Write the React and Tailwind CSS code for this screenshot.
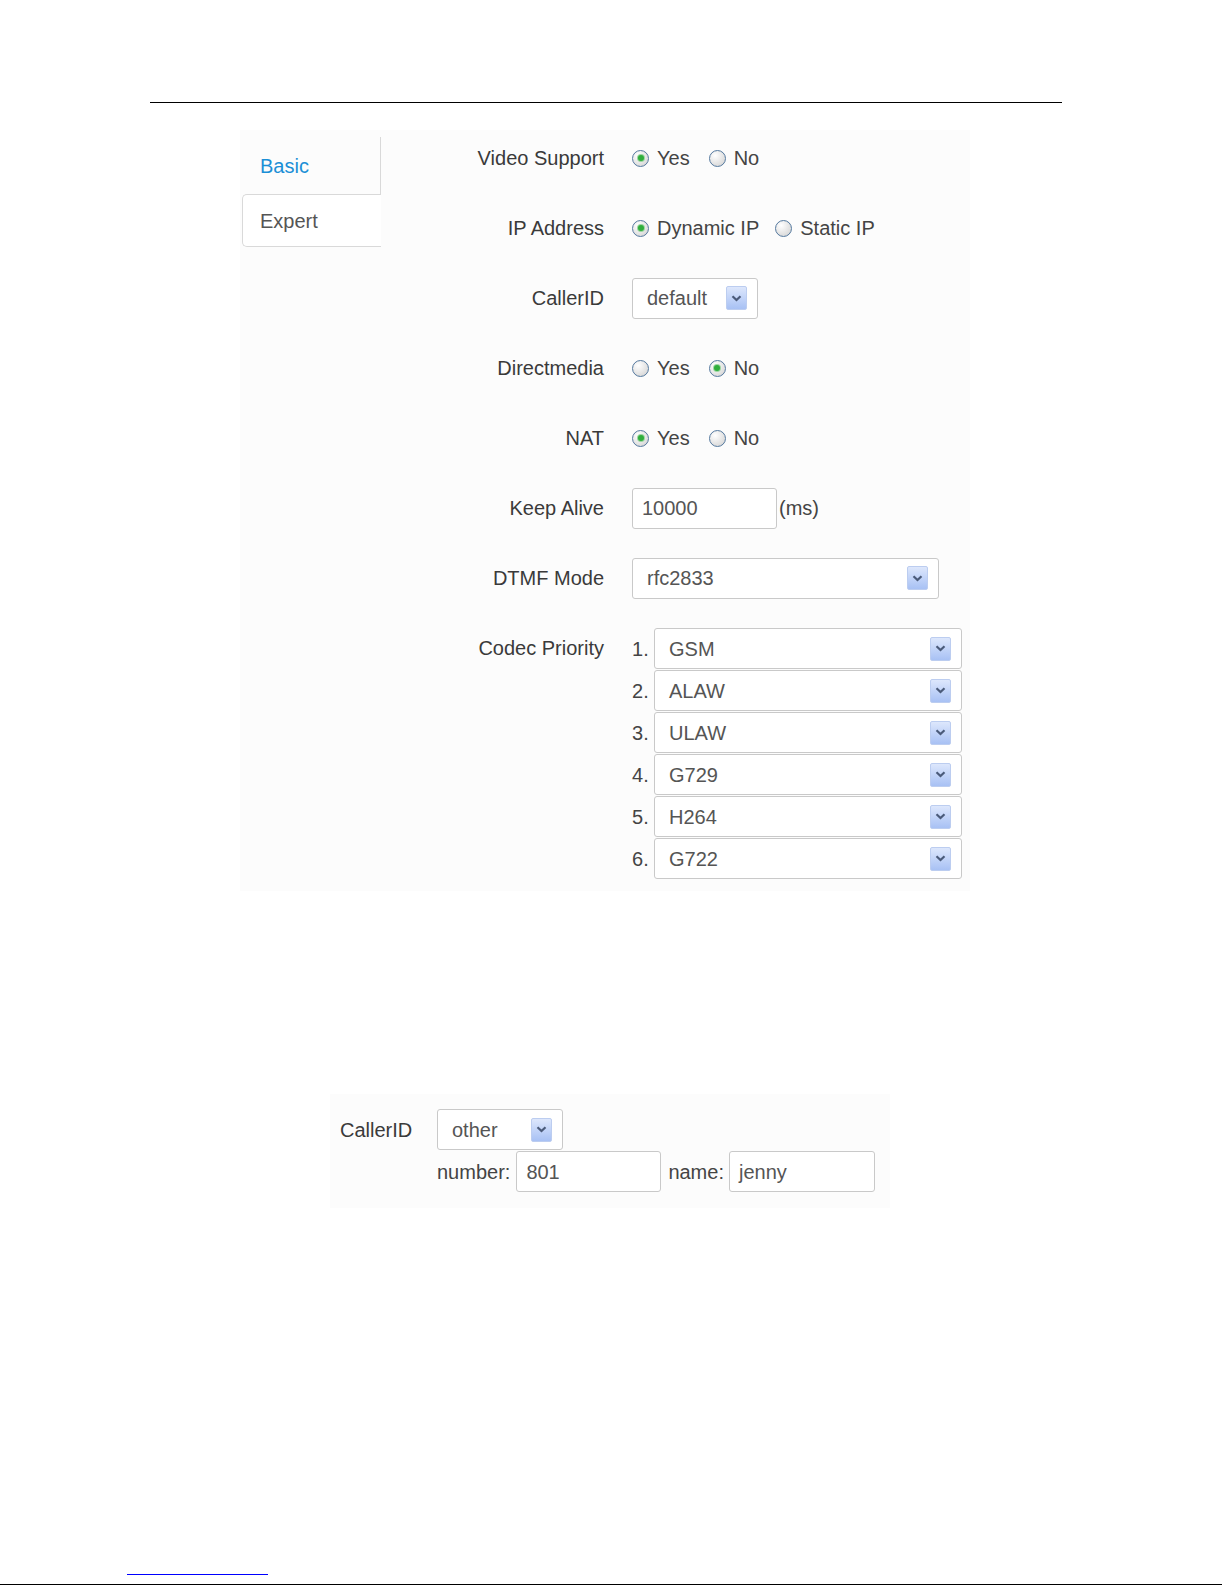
import React from 'react';

const font = { fontFamily: '"Liberation Sans", Arial, sans-serif' };

const Arrow = () => (
  <span className="ml-auto mr-[10px] flex h-[24px] w-[21px] items-center justify-center rounded-[2px] border border-[#bccdf0] bg-linear-to-b from-[#dde7fc] to-[#a8c1f4]">
    <svg width="11" height="7" viewBox="0 0 11 7">
      <path d="M1.5 1.2 L5.5 5 L9.5 1.2" stroke="#4b5b7a" strokeWidth="2.2" fill="none" />
    </svg>
  </span>
);

const Select = ({ value, width }) => (
  <div
    className="flex h-[41px] items-center rounded-[3px] border border-[#c9c9c9] bg-white pl-[14px] text-[#555]"
    style={{ width }}
  >
    <span>{value}</span>
    <Arrow />
  </div>
);

const Input = ({ value, width }) => (
  <div
    className="flex h-[41px] items-center rounded-[3px] border border-[#c9c9c9] bg-white pl-[9px] text-[#555]"
    style={{ width }}
  >
    {value}
  </div>
);

const Radio = ({ checked, label }) => (
  <div className="flex items-center">
    <span className="flex h-[17px] w-[17px] items-center justify-center rounded-full border border-[#55799f] bg-[radial-gradient(circle_at_35%_30%,#ffffff,#cfcfcf)]">
      {checked && <span className="h-[6px] w-[6px] rounded-full bg-[#2fae3c] shadow-[0_0_0_1px_#9bd6a0]" />}
    </span>
    <span className="ml-[8px] text-[#444]">{label}</span>
  </div>
);

const Row = ({ label, children, top }) => (
  <div className={`flex h-[40px] ${top ? 'items-start' : 'items-center'}`}>
    <div className={`w-[223px] text-right text-[#3a3a3a] ${top ? 'leading-[40px]' : ''}`}>{label}</div>
    <div className="ml-[28px] flex items-center">{children}</div>
  </div>
);

const codecs = ['GSM', 'ALAW', 'ULAW', 'G729', 'H264', 'G722'];

export default function App() {
  return (
    <div className="flex h-[1585px] flex-col bg-white text-[20px]" style={font}>
      <div className="ml-[150px] mt-[102px] h-px w-[912px] bg-black" />

      {/* screenshot 1 */}
      <div className="ml-[240px] mt-[27px] flex w-[730px] bg-[#fcfcfc] pb-[12px]">
        <div className="pl-[2px] pt-[7px]">
          <div className="flex h-[57px] w-[139px] items-center border-r border-[#d9d9d9] pl-[18px] text-[#1b8fd6]">
            Basic
          </div>
          <div className="flex h-[53px] w-[139px] items-center rounded-l-[5px] border border-r-0 border-[#d9d9d9] bg-white pl-[17px] text-[#555]">
            Expert
          </div>
        </div>

        <div className="flex flex-col gap-[30px] pt-[8px]">
          <Row label="Video Support">
            <Radio checked label="Yes" />
            <div className="ml-[19px]"><Radio label="No" /></div>
          </Row>
          <Row label="IP Address">
            <Radio checked label="Dynamic IP" />
            <div className="ml-[16px]"><Radio label="Static IP" /></div>
          </Row>
          <Row label="CallerID">
            <Select value="default" width={126} />
          </Row>
          <Row label="Directmedia">
            <Radio label="Yes" />
            <div className="ml-[19px]"><Radio checked label="No" /></div>
          </Row>
          <Row label="NAT">
            <Radio checked label="Yes" />
            <div className="ml-[19px]"><Radio label="No" /></div>
          </Row>
          <Row label="Keep Alive">
            <Input value="10000" width={145} />
            <span className="ml-[2px] text-[#444]">(ms)</span>
          </Row>
          <Row label="DTMF Mode">
            <Select value="rfc2833" width={307} />
          </Row>
          <div className="flex items-start">
            <div className="w-[223px] text-right leading-[40px] text-[#3a3a3a]">Codec Priority</div>
            <div className="ml-[28px] flex flex-col gap-[1px]">
              {codecs.map((c, i) => (
                <div key={c} className="flex items-center">
                  <span className="w-[22px] text-[#444]">{i + 1}.</span>
                  <Select value={c} width={308} />
                </div>
              ))}
            </div>
          </div>
        </div>
      </div>

      {/* screenshot 2 */}
      <div className="ml-[330px] mt-[203px] w-[560px] bg-[#fcfcfc] pb-[16px] pt-[15px]">
        <div className="flex items-center">
          <div className="w-[107px] pl-[10px] text-[#3a3a3a]">CallerID</div>
          <Select value="other" width={126} />
        </div>
        <div className="ml-[107px] mt-[1px] flex items-center text-[#444]">
          <span>number:</span>
          <div className="ml-[6px]"><Input value="801" width={145} /></div>
          <span className="ml-[7px]">name:</span>
          <div className="ml-[5px]"><Input value="jenny" width={146} /></div>
        </div>
      </div>

      <div className="mt-auto">
        <div className="ml-[127px] h-px w-[141px] bg-[#0000ff]" />
        <div className="mt-[9px] h-px w-[1222px] bg-black" />
      </div>
    </div>
  );
}
